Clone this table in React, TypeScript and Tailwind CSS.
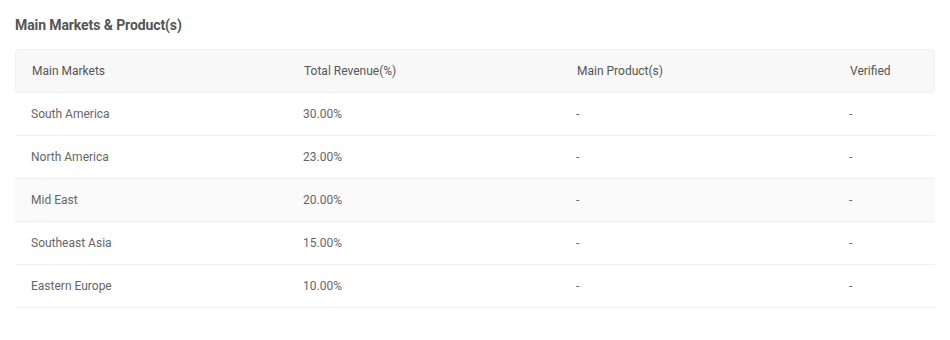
import React from 'react'

const rows = [
  { market: 'South America', revenue: '30.00%' },
  { market: 'North America', revenue: '23.00%' },
  { market: 'Mid East', revenue: '20.00%' },
  { market: 'Southeast Asia', revenue: '15.00%' },
  { market: 'Eastern Europe', revenue: '10.00%' },
]

const cols = 'grid grid-cols-[272px_273px_273px_1fr]'

export default function App() {
  return (
    <div className="w-[950px] h-[340px] bg-white px-[15px] pt-[16px]" style={{ fontFamily: 'Roboto, "Liberation Sans", sans-serif' }}>
      <h2 className="text-[14px] font-bold text-[#555] leading-[18px] tracking-[-0.1px]">Main Markets &amp; Product(s)</h2>
      <div className="mt-[15px] w-[920px]">
        <div className={`${cols} h-[44px] items-center bg-[#f8f8f8] border border-[#f0f0f0] rounded-sm text-[12px] text-[#555] pl-[16px]`}>
          <div>Main Markets</div>
          <div>Total Revenue(%)</div>
          <div>Main Product(s)</div>
          <div>Verified</div>
        </div>
        {rows.map((r, i) => (
          <div
            key={r.market}
            className={`${cols} h-[43px] items-center border-b border-[#f0f0f0] text-[12px] text-[#666] pl-[16px] ${i === 2 ? 'bg-[#fafafa]' : ''}`}
          >
            <div>{r.market}</div>
            <div>{r.revenue}</div>
            <div>-</div>
            <div>-</div>
          </div>
        ))}
      </div>
    </div>
  )
}
